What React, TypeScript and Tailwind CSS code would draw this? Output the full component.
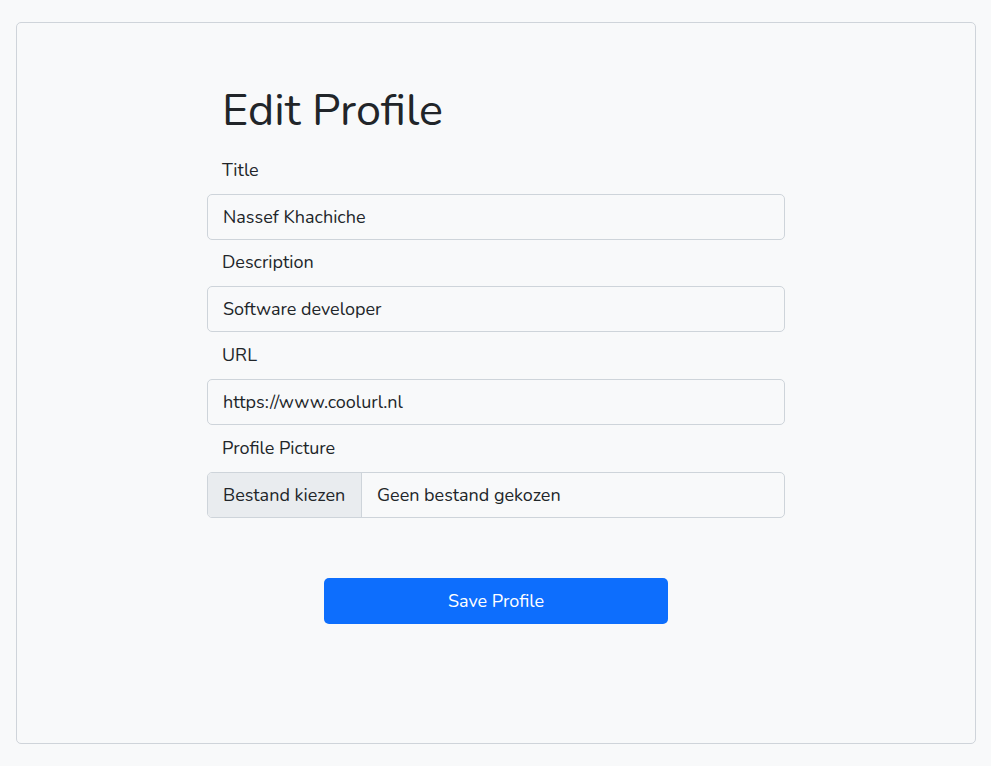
import React from "react";

const font = { fontFamily: '"Nunito", "Noto Sans", sans-serif' };

function Field({ label, value }: { label: string; value: string }) {
  return (
    <>
      <label className="flex h-[46.667px] items-center pl-[15px] text-[18px] text-[#212529]">{label}</label>
      <div className="flex h-[46px] items-center rounded-[5px] border border-[#ced4da] bg-[#f8f9fa] px-[15px] pt-px text-[18px] text-[#212529]">
        {value}
      </div>
    </>
  );
}

export default function App() {
  return (
    <div className="min-h-[766px] bg-[#f8f9fa] pl-4 pr-[15px] py-[22px]" style={font}>
      <div className="flex h-[722px] flex-col items-center rounded-[5px] border border-[#cfd4da] bg-[#f8f9fa] pt-[64px]">
        <div className="flex w-[578px] flex-col">
          <h1 className="pl-[15px] text-[45px] leading-[48px] text-[#212529]">Edit Profile</h1>
          <div className="h-[12px]" />
          <Field label="Title" value="Nassef Khachiche" />
          <Field label="Description" value="Software developer" />
          <Field label="URL" value="https://www.coolurl.nl" />
          <label className="flex h-[46.667px] items-center pl-[15px] text-[18px] text-[#212529]">Profile Picture</label>
          <div className="flex h-[46px] overflow-hidden rounded-[5px] border border-[#ced4da] bg-[#f8f9fa] text-[18px] text-[#212529]">
            <div className="flex w-[154px] items-center border-r border-[#ced4da] bg-[#e9ecef] px-[15px] pt-px">Bestand kiezen</div>
            <div className="flex items-center px-[15px] pt-px">Geen bestand gekozen</div>
          </div>
          <div className="mt-[60px] flex justify-center">
            <button className="h-[46px] w-[344px] rounded-[5px] bg-[#0d6efd] pt-[2px] text-[18px] text-white">Save Profile</button>
          </div>
        </div>
      </div>
    </div>
  );
}
